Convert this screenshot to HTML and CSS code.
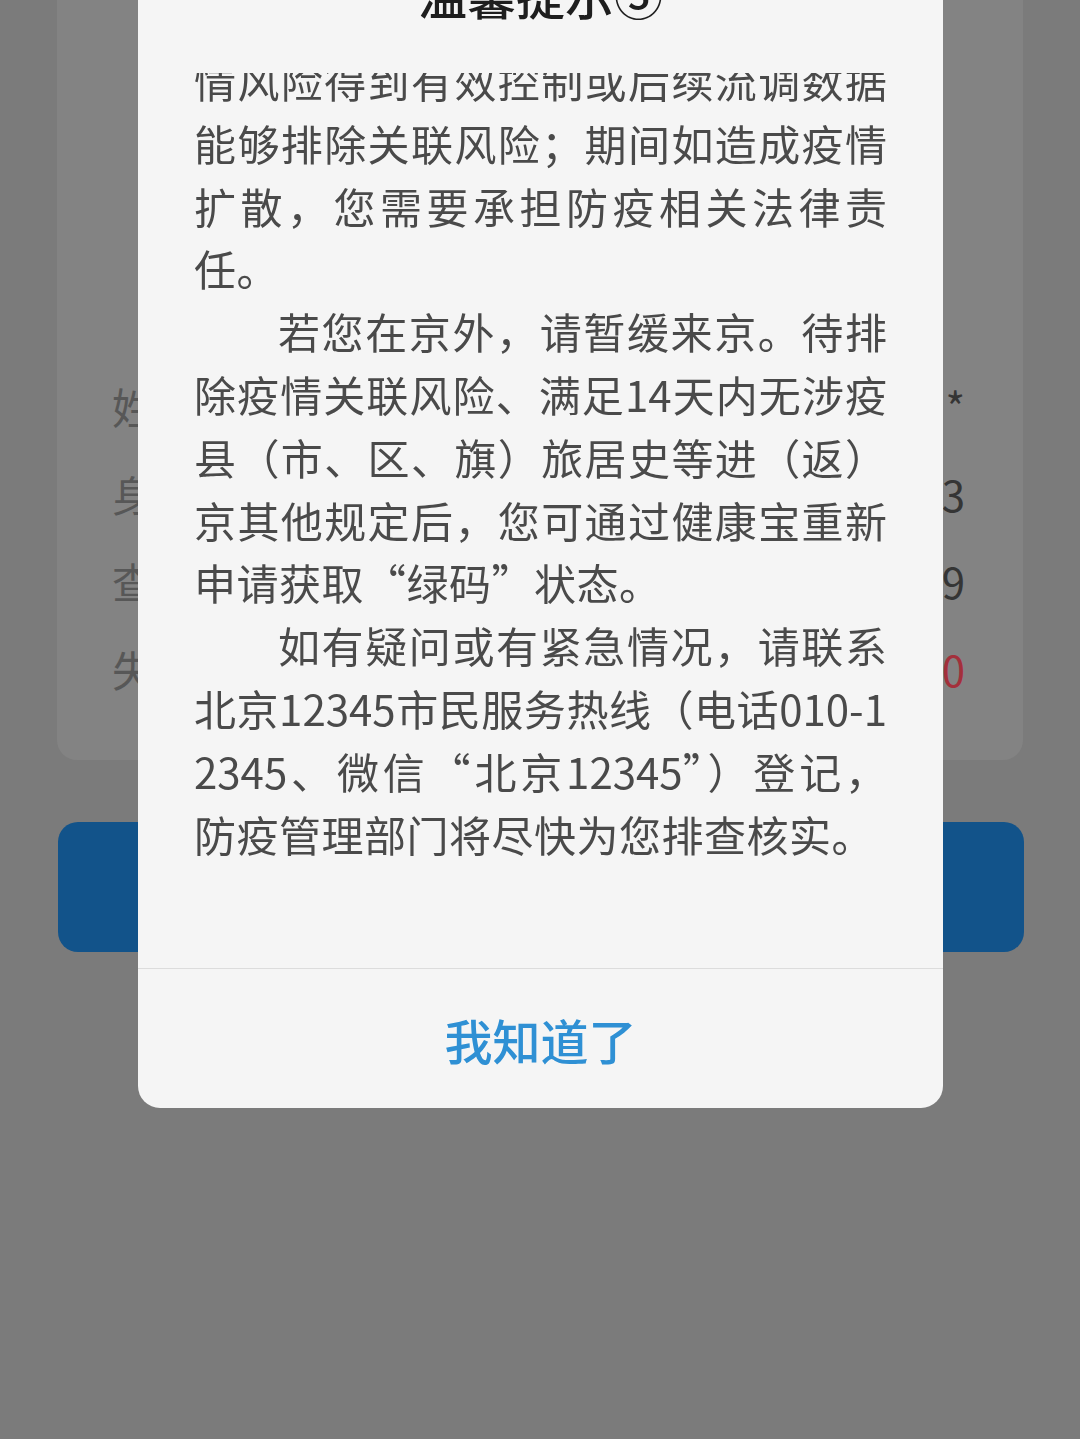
FILE: index.html
```html
<!DOCTYPE html>
<html lang="zh-CN">
<head>
<meta charset="utf-8">
<title>温馨提示</title>
<link rel="stylesheet" href="styles.css">
</head>
<body>
<div class="page">
  <section class="card">
    <div class="row"><span class="label">姓名</span><span class="value">张**</span></div>
    <div class="row"><span class="label">身份证号</span><span class="value">110************3</span></div>
    <div class="row"><span class="label">查询时间</span><span class="value">2022-05-09 10:21:39</span></div>
    <div class="row"><span class="label">失效时间</span><span class="value red">2022-05-09 10:36:40</span></div>
  </section>
  <button class="primary">重新查询</button>
</div>

<div class="mask">
  <div class="dialog">
    <h2 class="dlg-title">温馨提示⑤</h2>
    <div class="dlg-body">
      <div class="dlg-scroll">
        <p class="para">
          <span class="ln">情风险得到有效控制或后续流调数据</span>
          <span class="ln">能够排除关联风险；期间如造成疫情</span>
          <span class="ln">扩散，您需要承担防疫相关法律责</span>
          <span class="ln last">任。</span>
        </p>
        <p class="para">
          <span class="ln first">若您在京外，请暂缓来京。待排</span>
          <span class="ln">除疫情关联风险、满足14天内无涉疫</span>
          <span class="ln">县（市、区、旗）旅居史等进（返）</span>
          <span class="ln">京其他规定后，您可通过健康宝重新</span>
          <span class="ln last">申请获取“绿码”状态。</span>
        </p>
        <p class="para">
          <span class="ln first">如有疑问或有紧急情况，请联系</span>
          <span class="ln">北京12345市民服务热线（电话010-1</span>
          <span class="ln">2345、微信“北京12345”）登记，</span>
          <span class="ln last">防疫管理部门将尽快为您排查核实。</span>
        </p>
      </div>
    </div>
    <div class="dlg-foot">
      <button class="dlg-btn">我知道了</button>
    </div>
  </div>
</div>
</body>
</html>
```

FILE: styles.css
```css
html, body {
  margin: 0;
  padding: 0;
}

body {
  background: #7b7b7b;
  font-family: "Noto Sans CJK SC", "Noto Sans", sans-serif;
  height: 1439px;
  overflow: hidden;
}

.page {
  padding-left: 57px;
  width: 966px;
}

.card {
  margin-top: -40px;
  padding: 402px 58px 48px 55px;
  background: #838383;
  border-radius: 20px;
}

.row {
  display: flex;
  justify-content: space-between;
  height: 87.5px;
  line-height: 87.5px;
  font-size: 42px;
}

.label {
  color: #575757;
}

.value {
  color: #353535;
}

.value.red {
  color: #a3303b;
}

.primary {
  display: block;
  margin-top: 62px;
  margin-left: 1px;
  width: 966px;
  height: 130px;
  border: 0;
  border-radius: 20px;
  background: #12538a;
  color: #8aa4bb;
  font-family: inherit;
  font-size: 46px;
}

.mask {
  position: fixed;
  inset: 0;
}

.dialog {
  position: fixed;
  top: -79.5px;
  left: 138px;
  width: 805px;
  background: #f5f5f5;
  border-radius: 22px;
  overflow: hidden;
}

.dlg-title {
  margin: 0 0 48.5px;
  padding-top: 41px;
  height: 63px;
  line-height: 63px;
  text-align: center;
  font-size: 49px;
  font-weight: 500;
  color: #1e1e1e;
}

.dlg-body {
  height: 895px;
  overflow: hidden;
  padding: 0 56px;
}

.dlg-scroll {
  margin-top: -24px;
}

.para {
  margin: 0;
  font-size: 42px;
  line-height: 62.8px;
  color: #4a4a4a;
}

.ln {
  display: block;
  text-align: justify;
  text-align-last: justify;
}

.ln.first {
  text-indent: 84px;
}

.ln.last {
  text-align-last: left;
  letter-spacing: 0.5px;
}

.dlg-foot {
  border-top: 1px solid #dcdcdc;
  height: 139px;
  display: flex;
  align-items: center;
  justify-content: center;
}

.dlg-btn {
  background: none;
  border: 0;
  padding: 0;
  font-family: inherit;
  font-size: 48px;
  font-weight: 500;
  color: #2f90d4;
}
```
